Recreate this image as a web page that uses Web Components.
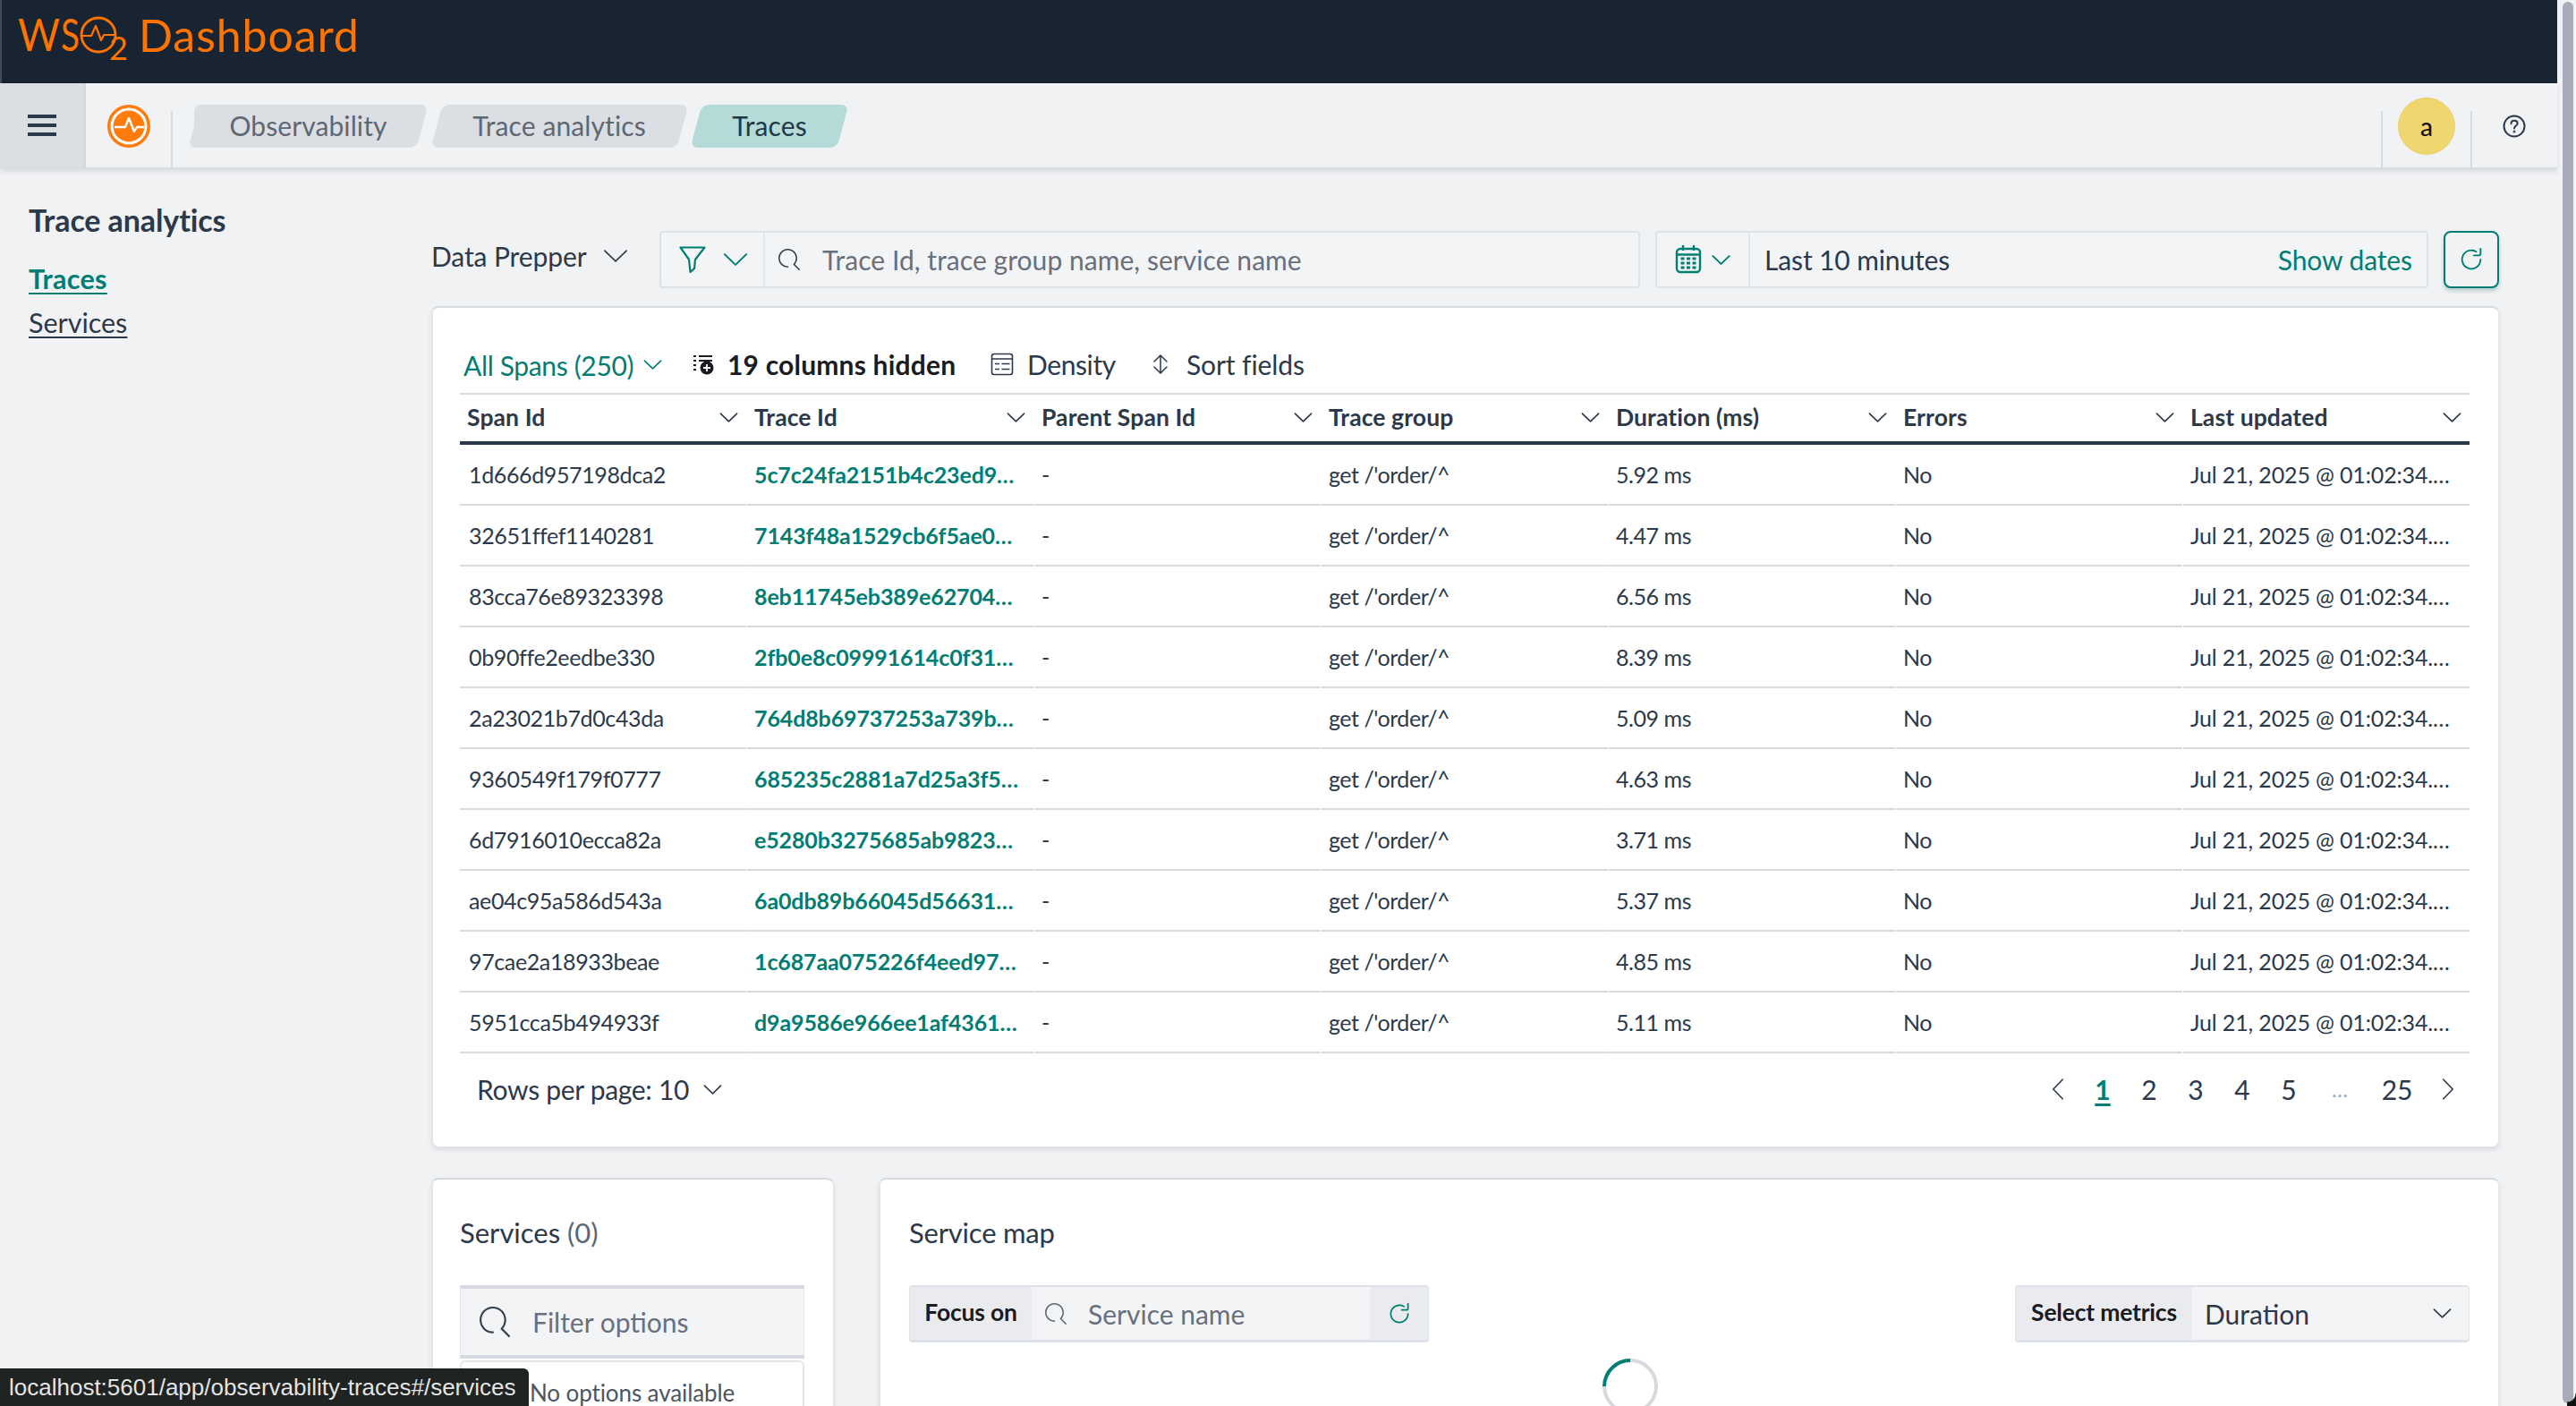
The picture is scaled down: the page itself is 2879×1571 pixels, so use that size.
<!DOCTYPE html>
<html>
<head>
<meta charset="utf-8">
<title>Traces</title>
<style>
  html, body { margin: 0; padding: 0; height: 100%; overflow: hidden; background: #f1f2f4; }
  body { font-family: "Lato", "Noto Sans", sans-serif; color: #2b394a; }
</style>
</head>
<body>
<wso-app></wso-app>
<script>
const icon = {
  chevron: (s, c = "currentColor", w = 1.6) => `<svg width="${s}" height="${s}" viewBox="0 0 16 16" fill="none" stroke="${c}" stroke-width="${16 / s * w}" stroke-linecap="round" stroke-linejoin="round"><path d="M2.6 5.4 8 10.6l5.4-5.2"/></svg>`,
  search: (s, c = "#343f4e") => `<svg width="${s}" height="${s}" viewBox="0 0 16 16" fill="${c}"><path d="M11.271 11.978l3.872 3.873a.502.502 0 00.708 0 .502.502 0 000-.708l-3.565-3.564c2.38-2.747 2.267-6.923-.342-9.532-2.73-2.73-7.17-2.73-9.898 0-2.728 2.729-2.728 7.17 0 9.9a6.955 6.955 0 004.949 2.05.5.5 0 000-1 5.96 5.96 0 01-4.242-1.757 6.01 6.01 0 010-8.486c2.337-2.34 6.143-2.34 8.484 0a6.01 6.01 0 010 8.486.5.5 0 00.034.738z"/></svg>`,
  refresh: (s, c = "#017d73") => `<svg width="${s}" height="${s}" viewBox="0 0 16 16" fill="${c}"><path d="M11.228 2.942a.5.5 0 11-.538.842A5 5 0 1013 8a.5.5 0 111 0 6 6 0 11-2.772-5.058zM14 1.5v3A1.5 1.5 0 0112.5 6h-3a.5.5 0 010-1h3a.5.5 0 00.5-.5v-3a.5.5 0 111 0z"/></svg>`,
  funnel: `<svg width="30" height="30" viewBox="0 0 30 30" fill="none" stroke="#017d73" stroke-width="2.2" stroke-linejoin="round"><path d="M1.5 1.5h27L18 15l-1 10-4.5 4L11 15z"/></svg>`,
  calendar: `<svg width="30" height="32" viewBox="0 0 30 32" fill="none" stroke="#017d73" stroke-width="2.4"><rect x="2" y="4" width="26" height="26" rx="4"/><path d="M2 10.5h26M9 0v6M21 0v6"/><g fill="#017d73" stroke="none"><rect x="6.5" y="13.5" width="4" height="3"/><rect x="13" y="13.5" width="4" height="3"/><rect x="19.5" y="13.5" width="4" height="3"/><rect x="6.5" y="18.5" width="4" height="3"/><rect x="13" y="18.5" width="4" height="3"/><rect x="19.5" y="18.5" width="4" height="3"/><rect x="6.5" y="23.5" width="4" height="3"/><rect x="13" y="23.5" width="4" height="3"/><rect x="19.5" y="23.5" width="4" height="3"/></g></svg>`,
  columns: `<svg width="24" height="24" viewBox="0 0 24 24"><g fill="#1a1c21"><rect x="0" y="2" width="3" height="2"/><rect x="6" y="2" width="15" height="2"/><rect x="0" y="7" width="3" height="2"/><rect x="6" y="7" width="15" height="2"/><rect x="0" y="12" width="3" height="2"/><rect x="0" y="17" width="3" height="2"/><circle cx="15" cy="16" r="7.5"/></g><path d="M15 12v8M11 16h8" stroke="#fff" stroke-width="1.8"/></svg>`,
  density: `<svg width="26" height="26" viewBox="0 0 26 26" fill="none" stroke="#2b394a" stroke-width="1.6"><rect x="1.5" y="1.5" width="23" height="23" rx="2.5"/><path d="M1.5 7h23M5 12.5h5M12.5 12.5h9M5 18.5h5M12.5 18.5h9"/></svg>`,
  sort: `<svg width="20" height="26" viewBox="0 0 20 26" fill="none" stroke="#2b394a" stroke-width="1.5" stroke-linecap="round" stroke-linejoin="round"><path d="M3 10l7-7 7 7M3 16l7 7 7-7M10 3v20"/></svg>`,
  help: `<svg width="26" height="26" viewBox="0 0 26 26" fill="none" stroke="#2b394a" stroke-width="2" stroke-linecap="round"><circle cx="13" cy="13" r="11.5"/><path d="M9.5 10.2c0-2 1.6-3.4 3.6-3.4s3.5 1.3 3.5 3.1c0 2.6-3.6 2.8-3.6 5.6"/><circle cx="13" cy="19" r=".5"/></svg>`
};

const headerTemplate = document.createElement("template");
headerTemplate.innerHTML = `
<style>
  :host { display: flex; align-items: flex-start; height: 93px; background: #182431; border-left: 2px solid #3f4b59; box-sizing: border-box; }
  .logo { display: block; margin: 0 0 0 16px; overflow: visible; }
  .title { margin: 9px 0 0 9px; font-size: 50px; line-height: 60px; color: #ff7300; letter-spacing: 0.95px; }
</style>
<svg class="logo" width="128" height="93" viewBox="0 0 128 93" fill="none">
  <text x="2" y="57" font-family="Lato" font-weight="400" font-size="50" fill="#ff7300" textLength="47" lengthAdjust="spacingAndGlyphs">W</text>
  <text x="50" y="57" font-family="Lato" font-weight="400" font-size="50" fill="#ff7300" textLength="21" lengthAdjust="spacingAndGlyphs">S</text>
  <circle cx="92" cy="39" r="19" stroke="#ff7300" stroke-width="2.8"/>
  <path d="M73 40h11l5-11 6 16 3-6h13" stroke="#ff7300" stroke-width="2.2" stroke-linejoin="round"/>
  <text x="104" y="67" font-family="Lato" font-weight="400" font-size="36" fill="#ff7300">2</text>
</svg>
<div class="title">Dashboard</div>
`;
class WsoHeader extends HTMLElement {
  constructor() {
    super();
    this.attachShadow({ mode: "open" });
    this.shadowRoot.appendChild(headerTemplate.content.cloneNode(true));
  }
}
customElements.define("wso-header", WsoHeader);

const crumbTemplate = document.createElement("template");
crumbTemplate.innerHTML = `
<style>
  :host { display: flex; position: relative; align-items: center; justify-content: center; height: 48px; font-size: 30px; color: #5f6872; letter-spacing: 0.1px; }
  :host([active]) { color: #1d3a44; }
  :host::before { content: ""; position: absolute; inset: 0; background: #dbdee2; border-radius: 8px; transform: skewX(-15deg); }
  :host([active])::before { background: #b5dbd9; }
  :host([first])::after { content: ""; position: absolute; left: 0; top: 0; bottom: 0; width: 40px; background: #dbdee2; border-radius: 8px 0 0 8px; }
  span { position: relative; z-index: 1; padding-bottom: 2px; }
</style>
<span><slot></slot></span>
`;
class BreadCrumb extends HTMLElement {
  constructor() {
    super();
    this.attachShadow({ mode: "open" });
    this.shadowRoot.appendChild(crumbTemplate.content.cloneNode(true));
  }
}
customElements.define("bread-crumb", BreadCrumb);

const navbarTemplate = document.createElement("template");
navbarTemplate.innerHTML = `
<style>
  :host { display: flex; height: 96px; background: #f1f2f4; border-bottom: 2px solid #d8dbdf; box-sizing: border-box; box-shadow: 0 3px 5px rgba(60,66,80,.12); position: relative; z-index: 2; }
  .menu { width: 96px; background: #dbdee2; display: flex; flex-direction: column; gap: 6px; align-items: center; justify-content: center; box-sizing: border-box; border-right: 2px solid #d4d7db; }
  .menu i { display: block; width: 32px; height: 4px; background: #2b3a4b; }
  .brand { width: 95px; display: flex; align-items: flex-start; justify-content: center; padding: 24px 0 0; box-sizing: border-box; }
  .sep { width: 2px; height: 63px; align-self: flex-end; background: #d8dbdf; }
  .crumbs { display: flex; gap: 15.5px; margin: 24px 0 0 24px; }
  .spacer { flex: 1; }
  .user { width: 98px; display: flex; justify-content: center; align-items: flex-start; padding-top: 16px; box-sizing: border-box; }
  .avatar { width: 64px; height: 64px; border-radius: 50%; background: #f0d66f; border: 1px solid #e9cf68; box-sizing: border-box; display: flex; align-items: center; justify-content: center; font-size: 28px; font-weight: 500; color: #111; }
  .help { width: 95px; padding: 35px 0 0 34px; box-sizing: border-box; line-height: 0; }
</style>
<div class="menu"><i></i><i></i><i></i></div>
<div class="brand">
  <svg width="48" height="48" viewBox="0 0 48 48"><circle cx="24" cy="24" r="24" fill="#ff7b0a"/><circle cx="24" cy="24" r="19" fill="none" stroke="#fff" stroke-width="3"/><path d="M8 25h12l4-10 6 15 3-5h8" fill="none" stroke="#fff" stroke-width="2.4" stroke-linejoin="round"/></svg>
</div>
<div class="sep"></div>
<div class="crumbs">
  <bread-crumb first style="width:255px">Observability</bread-crumb>
  <bread-crumb style="width:275px">Trace analytics</bread-crumb>
  <bread-crumb active style="width:164px">Traces</bread-crumb>
</div>
<div class="spacer"></div>
<div class="sep"></div>
<div class="user"><div class="avatar">a</div></div>
<div class="sep"></div>
<div class="help">${icon.help}</div>
`;
class WsoNavbar extends HTMLElement {
  constructor() {
    super();
    this.attachShadow({ mode: "open" });
    this.shadowRoot.appendChild(navbarTemplate.content.cloneNode(true));
  }
}
customElements.define("wso-navbar", WsoNavbar);

const sideTemplate = document.createElement("template");
sideTemplate.innerHTML = `
<style>
  :host { display: block; width: 482px; flex: none; padding: 35px 0 0 32px; box-sizing: border-box; }
  h2 { margin: 0 0 25px; font-size: 34px; line-height: 44px; font-weight: 700; color: #2b394a; letter-spacing: -0.1px; }
  a { display: table; font-size: 30.5px; line-height: 36px; margin-bottom: 13px; color: #2b394a; text-decoration: underline; text-decoration-thickness: 2px; text-underline-offset: 4px; }
  a.on { color: #017d73; font-weight: 700; letter-spacing: 0.3px; }
</style>
<h2>Trace analytics</h2>
<a class="on">Traces</a>
<a>Services</a>
`;
class TraceSidebar extends HTMLElement {
  constructor() {
    super();
    this.attachShadow({ mode: "open" });
    this.shadowRoot.appendChild(sideTemplate.content.cloneNode(true));
  }
}
customElements.define("trace-sidebar", TraceSidebar);

const searchTemplate = document.createElement("template");
searchTemplate.innerHTML = `
<style>
  :host { display: flex; height: 64px; gap: 17px; align-items: stretch; font-size: 30px; }
  .source { width: 238px; flex: none; display: flex; align-items: center; gap: 14px; padding: 0 0 8px 0; box-sizing: border-box; letter-spacing: -0.1px; line-height: 0; }
  .source span { line-height: 36px; }
  .box { display: flex; align-items: center; border: 2px solid #dde2e8; border-radius: 4px; background: #f3f4f6; box-sizing: border-box; }
  .filter { width: 1096px; }
  .date { width: 864px; }
  .pre { height: 100%; display: flex; align-items: center; flex: none; box-sizing: border-box; border-right: 2px solid #e3e6ea; line-height: 0; }
  .filter .pre { width: 116px; padding-left: 20px; gap: 15px; color: #017d73; }
  .date .pre { width: 104px; padding-left: 20px; gap: 8px; color: #017d73; }
  .placeholder { margin-left: 25px; color: #69707d; letter-spacing: 0.05px; }
  .mag { margin-left: 15px; line-height: 0; }
  .range { margin-left: 16px; letter-spacing: -0.13px; }
  .show { margin-left: auto; margin-right: 16px; color: #017d73; letter-spacing: -0.1px; }
  .refresh { width: 62px; flex: none; box-sizing: border-box; border: 2px solid #017d73; border-radius: 8px; background: #f1f2f4; display: flex; align-items: center; justify-content: center; box-shadow: 0 3px 4px rgba(1,90,85,.25); }
</style>
<div class="source"><span>Data Prepper</span>${icon.chevron(36)}</div>
<div class="box filter">
  <div class="pre">${icon.funnel}${icon.chevron(36, "currentColor", 2)}</div>
  <div class="mag">${icon.search(24)}</div>
  <div class="placeholder">Trace Id, trace group name, service name</div>
</div>
<div class="box date">
  <div class="pre">${icon.calendar}${icon.chevron(27, "currentColor", 2)}</div>
  <div class="range">Last 10 minutes</div>
  <div class="show">Show dates</div>
</div>
<div class="refresh">${icon.refresh(30)}</div>
`;
class SearchToolbar extends HTMLElement {
  constructor() {
    super();
    this.attachShadow({ mode: "open" });
    this.shadowRoot.appendChild(searchTemplate.content.cloneNode(true));
  }
}
customElements.define("search-toolbar", SearchToolbar);

const cardTemplate = document.createElement("template");
cardTemplate.innerHTML = `
<style>
  :host { display: block; box-sizing: border-box; background: #fff; border: 1px solid #e2e5e9; border-left-width: 2px; border-top: 2px solid #d6d9de; border-radius: 8px; box-shadow: 0 3px 5px rgba(60,66,80,.12); padding: 0 32px 0 30px; }
</style>
<slot></slot>
`;
class PanelCard extends HTMLElement {
  constructor() {
    super();
    this.attachShadow({ mode: "open" });
    this.shadowRoot.appendChild(cardTemplate.content.cloneNode(true));
  }
}
customElements.define("panel-card", PanelCard);

const ROWS = [
  ["1d666d957198dca2", "5c7c24fa2151b4c23ed9…", "5.92 ms"],
  ["32651ffef1140281", "7143f48a1529cb6f5ae0…", "4.47 ms"],
  ["83cca76e89323398", "8eb11745eb389e62704…", "6.56 ms"],
  ["0b90ffe2eedbe330", "2fb0e8c09991614c0f31…", "8.39 ms"],
  ["2a23021b7d0c43da", "764d8b69737253a739b…", "5.09 ms"],
  ["9360549f179f0777", "685235c2881a7d25a3f5…", "4.63 ms"],
  ["6d7916010ecca82a", "e5280b3275685ab9823…", "3.71 ms"],
  ["ae04c95a586d543a", "6a0db89b66045d56631…", "5.37 ms"],
  ["97cae2a18933beae", "1c687aa075226f4eed97…", "4.85 ms"],
  ["5951cca5b494933f", "d9a9586e966ee1af4361…", "5.11 ms"]
];
const COLUMNS = ["Span Id", "Trace Id", "Parent Span Id", "Trace group", "Duration (ms)", "Errors", "Last updated"];

const tableTemplate = document.createElement("template");
tableTemplate.innerHTML = `
<style>
  :host { display: block; font-size: 25px; }
  .tools { height: 95px; display: flex; align-items: center; padding: 30px 0 0 4px; box-sizing: border-box; font-size: 30px; letter-spacing: -0.1px; }
  .tools .item { display: flex; align-items: center; line-height: 0; }
  .tools span { line-height: 36px; }
  .spans { color: #017d73; gap: 8px; width: 257px; padding-top: 2px; letter-spacing: -0.35px; }
  .hidden { gap: 14px; width: 332px; font-weight: 700; color: #1a1c21; letter-spacing: 0.2px; }
  .dens { gap: 15px; width: 180px; letter-spacing: -0.4px; }
  .sort { gap: 19px; }
  .row { display: grid; grid-template-columns: repeat(7, 1fr); column-gap: 1px; }
  .head { height: 58px; border-top: 2px solid #d6d9de; border-bottom: 4px solid #2b3a4b; box-sizing: border-box; align-items: center; font-weight: 700; font-size: 26.5px; letter-spacing: 0.1px; }
  .head div { display: flex; justify-content: space-between; align-items: center; padding: 0 6px 2px 8px; line-height: 0; }
  .head span { line-height: 30px; }
  .cell { height: 68px; box-sizing: border-box; border-bottom: 2px solid #d6d9de; padding: 0 8px; display: flex; align-items: center; white-space: nowrap; letter-spacing: -0.45px; }
  .cell.span { padding-left: 10px; letter-spacing: -0.37px; }
  .cell.tid { color: #017d73; font-weight: 700; letter-spacing: -0.12px; }
  .cell.date { letter-spacing: -0.15px; }
  .pager { height: 80px; display: flex; align-items: center; justify-content: space-between; font-size: 30px; margin-bottom: 24px; letter-spacing: -0.1px; }
  .rows { display: flex; align-items: center; gap: 13px; padding-left: 19px; line-height: 0; letter-spacing: -0.3px; }
  .rows span { line-height: 36px; }
  .pages { display: flex; align-items: center; line-height: 0; }
  .pages b { font-weight: 400; width: 52px; text-align: center; line-height: 36px; }
  .pages b.cur { color: #017d73; font-weight: 700; text-decoration: underline; text-decoration-thickness: 3px; text-underline-offset: 4px; }
  .pages b.more { color: #a3a8b0; width: 62px; font-size: 24px; }
  .pages b.wide { width: 66px; }
</style>
<div class="tools">
  <div class="item spans"><span>All Spans (250)</span>${icon.chevron(27)}</div>
  <div class="item hidden">${icon.columns}<span>19 columns hidden</span></div>
  <div class="item dens">${icon.density}<span>Density</span></div>
  <div class="item sort">${icon.sort}<span>Sort fields</span></div>
</div>
<div class="row head">${COLUMNS.map(c => `<div><span>${c}</span>${icon.chevron(27)}</div>`).join("")}</div>
${ROWS.map(r => `<div class="row">
  <div class="cell span">${r[0]}</div>
  <div class="cell tid">${r[1]}</div>
  <div class="cell">-</div>
  <div class="cell">get /'order/^</div>
  <div class="cell">${r[2]}</div>
  <div class="cell">No</div>
  <div class="cell date">Jul 21, 2025 @ 01:02:34.…</div>
</div>`).join("")}
<div class="pager">
  <div class="rows"><span>Rows per page: 10</span>${icon.chevron(27)}</div>
  <div class="pages">
    ${icon.chevron(32).replace("<svg ", '<svg style="transform:rotate(90deg);margin-right:8px" ')}
    <b class="cur">1</b><b>2</b><b>3</b><b>4</b><b>5</b><b class="more">…</b><b class="wide">25</b>
    ${icon.chevron(32).replace("<svg ", '<svg style="transform:rotate(-90deg);margin-left:8px;margin-right:8px" ')}
  </div>
</div>
`;
class TracesTable extends HTMLElement {
  constructor() {
    super();
    this.attachShadow({ mode: "open" });
    this.shadowRoot.appendChild(tableTemplate.content.cloneNode(true));
  }
}
customElements.define("traces-table", TracesTable);

const servicesTemplate = document.createElement("template");
servicesTemplate.innerHTML = `
<style>
  :host { display: block; padding-top: 39px; }
  h3 { margin: 0 0 39px; font-size: 31px; line-height: 40px; font-weight: 400; }
  h3 small { font-size: inherit; color: #5d6670; }
  .filter { height: 82px; display: flex; align-items: center; gap: 25px; padding-left: 21px; box-sizing: border-box; background: #f3f4f6; border-top: 4px solid #d6dae0; border-bottom: 4px solid #d6dae0; border-left: 1px solid #e2e5e9; border-right: 1px solid #e2e5e9; font-size: 30px; color: #69707d; line-height: 0; }
  .filter span { line-height: 36px; }
  .list { margin-top: 2px; height: 80px; border: 2px solid #e2e5e9; border-radius: 6px; padding: 16px 0 0 76px; box-sizing: border-box; font-size: 26px; line-height: 36px; color: #4c5561; letter-spacing: -0.1px; }
</style>
<h3>Services <small>(0)</small></h3>
<div class="filter">${icon.search(34)}<span>Filter options</span></div>
<div class="list">No options available</div>
`;
class ServicesPanel extends HTMLElement {
  constructor() {
    super();
    this.attachShadow({ mode: "open" });
    this.shadowRoot.appendChild(servicesTemplate.content.cloneNode(true));
  }
}
customElements.define("services-panel", ServicesPanel);

const mapTemplate = document.createElement("template");
mapTemplate.innerHTML = `
<style>
  :host { display: block; padding: 39px 0 0 2px; }
  h3 { margin: 0 0 39px; font-size: 31px; line-height: 40px; font-weight: 400; letter-spacing: -0.2px; }
  .controls { display: flex; justify-content: space-between; height: 64px; }
  .group { display: flex; align-items: stretch; border: 1px solid #dde2e8; border-top-width: 2px; border-bottom-width: 3px; border-radius: 4px; box-sizing: border-box; font-size: 30px; overflow: hidden; background: #f3f4f6; }
  .label { background: #e9ebee; display: flex; align-items: center; justify-content: center; font-size: 26.5px; font-weight: 700; color: #1a1c21; letter-spacing: -0.2px; flex: none; padding-bottom: 3px; box-sizing: border-box; }
  .focus { width: 581px; }
  .focus .label { width: 136px; }
  .input { flex: 1; display: flex; align-items: center; gap: 24px; padding-left: 15px; color: #69707d; line-height: 0; }
  .input span { line-height: 36px; }
  .btn { width: 65px; background: #e9ebee; display: flex; align-items: center; justify-content: center; flex: none; }
  .metrics { width: 508px; }
  .metrics .label { width: 197px; }
  .select { flex: 1; display: flex; align-items: center; justify-content: space-between; padding: 0 16px 0 14px; line-height: 0; }
  .select span { line-height: 36px; }
  .spin { width: 62px; height: 62px; box-sizing: border-box; margin: 18px 0 0 775px; border-radius: 50%; border: 4px solid #d6d9de; border-left-color: #017d73; transform: rotate(45deg); }
</style>
<h3>Service map</h3>
<div class="controls">
  <div class="group focus">
    <div class="label">Focus on</div>
    <div class="input">${icon.search(24, "#5d6670")}<span>Service name</span></div>
    <div class="btn">${icon.refresh(28)}</div>
  </div>
  <div class="group metrics">
    <div class="label">Select metrics</div>
    <div class="select"><span>Duration</span>${icon.chevron(27)}</div>
  </div>
</div>
<div class="spin"></div>
`;
class ServiceMap extends HTMLElement {
  constructor() {
    super();
    this.attachShadow({ mode: "open" });
    this.shadowRoot.appendChild(mapTemplate.content.cloneNode(true));
  }
}
customElements.define("service-map", ServiceMap);

const appTemplate = document.createElement("template");
appTemplate.innerHTML = `
<style>
  :host { display: block; position: relative; width: 2879px; height: 1571px; overflow: hidden; background: #f1f2f4; }
  .page { width: 2858px; }
  .body { display: flex; }
  .content { width: 2311px; padding-top: 69px; display: flex; flex-direction: column; }
  .cards { display: grid; grid-template-columns: 450px 1811px; column-gap: 50px; margin-top: 34px; }
  .cards panel-card { height: 400px; }
  .top { margin-top: 20px; }
  .scroll { position: absolute; top: 2px; right: 3px; width: 12px; height: 1566px; background: #a7acb8; border-radius: 6px; }
  .status { position: absolute; left: 0; bottom: 0; height: 42px; padding: 0 14px 0 10px; display: flex; align-items: center; background: #1f2322; color: #e4e4e4; font-family: "Liberation Sans", sans-serif; font-size: 26px; border-top-right-radius: 6px; z-index: 5; }
  .corner { position: absolute; right: 0; bottom: 0; width: 10px; height: 14px; background: radial-gradient(circle at 0 0, transparent 9px, #111 10px); }
</style>
<div class="page">
  <wso-header></wso-header>
  <wso-navbar></wso-navbar>
  <div class="body">
    <trace-sidebar></trace-sidebar>
    <div class="content">
      <search-toolbar></search-toolbar>
      <panel-card class="top"><traces-table></traces-table></panel-card>
      <div class="cards">
        <panel-card><services-panel></services-panel></panel-card>
        <panel-card><service-map></service-map></panel-card>
      </div>
    </div>
  </div>
</div>
<div class="scroll"></div>
<div class="corner"></div>
<div class="status">localhost:5601/app/observability-traces#/services</div>
`;
class WsoApp extends HTMLElement {
  constructor() {
    super();
    this.attachShadow({ mode: "open" });
    this.shadowRoot.appendChild(appTemplate.content.cloneNode(true));
  }
}
customElements.define("wso-app", WsoApp);
</script>
</body>
</html>
